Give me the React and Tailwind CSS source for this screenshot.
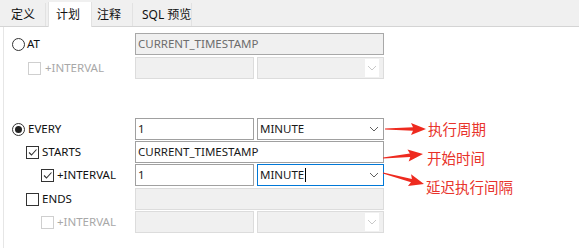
import React from 'react';

const font = { fontFamily: '"Segoe UI", "Noto Sans", "Noto Sans CJK SC", sans-serif' };

const Chevron = ({ faded }) => (
  <svg width="10" height="6" viewBox="0 0 10 6" className={faded ? 'text-[#c8c8c8]' : 'text-[#606060]'}>
    <path d="M1 1 L5 5 L9 1" fill="none" stroke="currentColor" strokeWidth="1" />
  </svg>
);

const Radio = ({ checked }) => (
  <span className="w-[13px] h-[13px] rounded-full border border-[#333] bg-white flex items-center justify-center shrink-0">
    {checked && <span className="w-[7px] h-[7px] rounded-full bg-[#222]" />}
  </span>
);

const Check = ({ checked, disabled }) => (
  <span
    className={`w-[13px] h-[13px] border bg-white flex items-center justify-center shrink-0 ${
      disabled ? 'border-[#cfcfcf]' : 'border-[#333]'
    }`}
  >
    {checked && (
      <svg width="11" height="11" viewBox="0 0 11 11">
        <path d="M2 5.5 L4.5 8 L9.5 2.5" fill="none" stroke="#333" strokeWidth="1.1" />
      </svg>
    )}
  </span>
);

const Input = ({ value, disabled, dark, wide }) => (
  <div
    className={`h-[22px] flex items-center px-[2px] text-[11.5px] whitespace-nowrap border ${wide ? 'w-[249px]' : 'w-[119px]'} ${
      disabled
        ? `bg-[#f0f0f0] text-[#6d6d6d] ${dark ? 'border-[#a8a8a8]' : 'border-[#dcdcdc]'}`
        : 'bg-white text-[#1a1a1a] border-[#a0a0a0]'
    }`}
  >
    {value}
  </div>
);

const Select = ({ value, disabled, focused }) => (
  <div
    className={`h-[22px] w-[127px] flex items-center justify-between pl-[2px] pr-[4px] text-[11.5px] border ${
      disabled
        ? 'bg-[#f0f0f0] border-[#dcdcdc]'
        : focused
        ? 'bg-white border-[#0078d7] text-[#1a1a1a]'
        : 'bg-white border-[#a0a0a0] text-[#1a1a1a]'
    }`}
  >
    <span className="flex items-center">
      {value}
      {focused && <span className="w-px h-[14px] bg-black ml-px" />}
    </span>
    <span className={disabled ? 'bg-white h-[18px] w-[14px] flex items-center justify-center' : ''}>
      <Chevron faded={disabled} />
    </span>
  </div>
);

const Row = ({ indent, children, label, className = '' }) => (
  <div className={`flex items-center h-[22px] ${className}`}>
    <div className="w-[134px] flex items-center text-[11.5px] whitespace-nowrap" style={{ paddingLeft: indent }}>
      {label}
    </div>
    <div className="flex items-center gap-[3px]">{children}</div>
  </div>
);

const Arrow = ({ x1, y1, x2, y2 }) => {
  const dx = x2 - x1;
  const dy = y2 - y1;
  const len = Math.sqrt(dx * dx + dy * dy);
  const ang = (Math.atan2(dy, dx) * 180) / Math.PI;
  const h = 13;
  return (
    <g transform={`translate(${x1} ${y1}) rotate(${ang})`}>
      <polygon
        points={`0,-0.6 ${len - h},-1.8 ${len - h - 2},-6 ${len},0 ${len - h - 2},6 ${len - h},1.8 0,0.6`}
        fill="#ee2a1f"
      />
    </g>
  );
};

const tabs = [
  { name: '定义', cls: 'w-[46px] pl-[11px] bg-[#f0f0f0] h-[23px]' },
  { name: '计划', cls: 'w-[44px] pl-[7px] ml-[2px] bg-white h-[25px] -mb-px border-l' },
  { name: '注释', cls: 'w-[41px] pl-[5px] bg-[#f0f0f0] h-[23px]' },
  { name: 'SQL 预览', cls: 'w-[59px] pl-[9px] bg-[#f0f0f0] h-[23px]' },
];

export default function App() {
  return (
    <div className="w-[579px] h-[248px] bg-white relative overflow-hidden text-[12px] text-[#111]" style={font}>
      <div className="h-[27px] bg-[#f0f0f0] border-b border-[#d4d4d4] flex items-end">
        {tabs.map((t) => (
          <div
            key={t.name}
            className={`shrink-0 whitespace-nowrap flex items-center border-r border-[#e2e2e2] text-[12px] ${t.cls}`}
          >
            {t.name}
          </div>
        ))}
      </div>

      <div className="border-l border-[#e6e6e6] ml-[3px] h-full pl-[1px]">
        <div className="pt-[6px] -ml-[4px]">
          <Row indent={11} label={<><Radio /><span className="ml-[2px]">AT</span></>}>
            <Input value="CURRENT_TIMESTAMP" disabled dark wide />
          </Row>
          <Row
            indent={27}
            className="mt-[2px]"
            label={<><Check disabled /><span className="ml-[4px] text-[#a8a8a8]">+INTERVAL</span></>}
          >
            <Input disabled />
            <Select disabled />
          </Row>

          <Row indent={11} className="mt-[39px]" label={<><Radio checked /><span className="ml-[3px]">EVERY</span></>}>
            <Input value="1" />
            <Select value="MINUTE" />
          </Row>
          <Row indent={25} className="mt-px" label={<><Check checked /><span className="ml-[3px]">STARTS</span></>}>
            <Input value="CURRENT_TIMESTAMP" wide />
          </Row>
          <Row indent={40} className="mt-px" label={<><Check checked /><span className="ml-[3px]">+INTERVAL</span></>}>
            <Input value="1" />
            <Select value="MINUTE" focused />
          </Row>
          <Row indent={25} className="mt-[2px]" label={<><Check /><span className="ml-[3px]">ENDS</span></>}>
            <Input disabled wide />
          </Row>
          <Row
            indent={40}
            className="mt-px"
            label={<><Check disabled /><span className="ml-[3px] text-[#a8a8a8]">+INTERVAL</span></>}
          >
            <Input disabled />
            <Select disabled />
          </Row>
        </div>
      </div>

      <svg className="absolute left-0 top-0" width="579" height="248">
        <Arrow x1={385} y1={129} x2={426} y2={129} />
        <Arrow x1={383} y1={158} x2={423} y2={154} />
        <Arrow x1={383} y1={173} x2={424} y2={184} />
      </svg>
      <div className="absolute left-[428px] top-[119px] text-[14.5px] text-[#e8332b] leading-[20px]" style={font}>执行周期</div>
      <div className="absolute left-[427px] top-[148px] text-[14.5px] text-[#e8332b] leading-[20px]" style={font}>开始时间</div>
      <div className="absolute left-[426px] top-[177px] text-[14.5px] text-[#e8332b] leading-[20px]" style={font}>延迟执行间隔</div>
    </div>
  );
}
